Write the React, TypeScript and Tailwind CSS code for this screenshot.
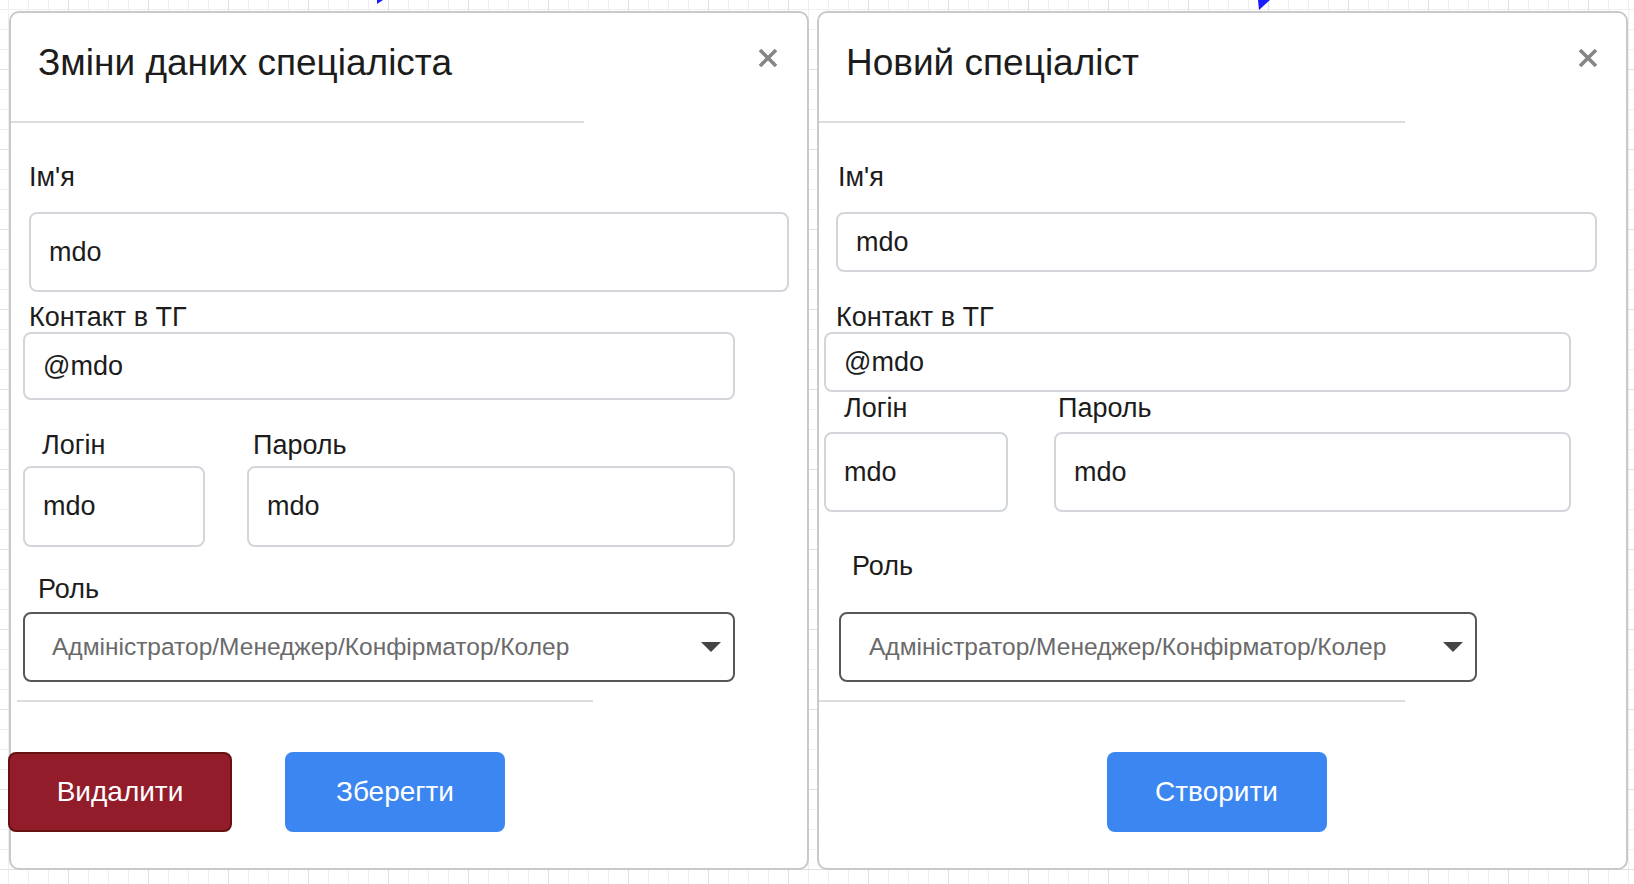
import React from 'react';

const input =
  "block rounded-[8px] border-2 border-[#d2d6db] bg-white px-[18px] text-[27px] text-[#1c1c1c] outline-none";

function CloseIcon({ className }: { className?: string }) {
  return (
    <svg width="20" height="20" viewBox="0 0 20 20" className={className}>
      <path d="M2 2 L18 18 M18 2 L2 18" stroke="#858585" strokeWidth="3.6" />
    </svg>
  );
}

function RoleSelect({ className }: { className: string }) {
  return (
    <div className={`flex items-center justify-between rounded-[8px] border-2 border-[#575757] bg-white ${className}`}>
      <span className="text-[24.5px] text-[#6a6a6a]">Адміністратор/Менеджер/Конфірматор/Колер</span>
      <svg width="20" height="10" viewBox="0 0 20 10">
        <polygon points="0,0 20,0 10,10" fill="#454545" />
      </svg>
    </div>
  );
}

export default function App() {
  return (
    <div className="relative h-[884px] w-full overflow-hidden bg-white bg-[linear-gradient(to_right,#e0e0e0_1px,transparent_1px),linear-gradient(to_bottom,#e0e0e0_1px,transparent_1px),linear-gradient(to_right,#efefef_1px,transparent_1px),linear-gradient(to_bottom,#efefef_1px,transparent_1px)] bg-[size:80px_80px,80px_80px,20px_20px,20px_20px] bg-[position:68px_69px,68px_69px,8px_9px,8px_9px] font-['Liberation_Sans',Arial,sans-serif] text-[#1c1c1c]">
      {/* arrow tips peeking from behind the dialogs */}
      <svg className="absolute left-[376px] top-0" width="8" height="5" viewBox="0 0 8 5">
        <polygon points="1,0 7,0 1,4" fill="#1a1aff" />
      </svg>
      <svg className="absolute left-[1257px] top-0" width="14" height="11" viewBox="0 0 14 11">
        <polygon points="1,0 13,0 2,10" fill="#1a1aff" />
      </svg>

      <div className="flex gap-[8px] pl-[9px] pt-[11px]">
        {/* Edit specialist */}
        <div className="flex h-[859px] w-[800px] shrink-0 flex-col rounded-[10px] border-2 border-[#c9c9c9] bg-white">
          <div className="flex items-start justify-between pl-[27px] pr-[29px] pt-[31px]">
            <h1 className="text-[37px] leading-none">Зміни даних спеціаліста</h1>
            <CloseIcon className="mt-[4px]" />
          </div>
          <div className="mt-[40px] h-[2px] w-[573px] bg-[#dcdcdc]" />

          <label className="ml-[18px] mt-[41px] text-[27px] leading-none">Ім'я</label>
          <input readOnly value="mdo" className={`${input} ml-[18px] mt-[21px] h-[80px] w-[760px]`} />

          <label className="ml-[18px] mt-[12px] text-[27px] leading-none">Контакт в ТГ</label>
          <input readOnly value="@mdo" className={`${input} ml-[12px] mt-[1px] h-[68px] w-[712px]`} />

          <div className="ml-[12px] mt-[32px] flex gap-[42px]">
            <div className="flex w-[182px] flex-col">
              <label className="ml-[19px] text-[27px] leading-none">Логін</label>
              <input readOnly value="mdo" className={`${input} mt-[7px] h-[81px] w-full`} />
            </div>
            <div className="flex w-[488px] flex-col">
              <label className="ml-[6px] text-[27px] leading-none">Пароль</label>
              <input readOnly value="mdo" className={`${input} mt-[7px] h-[81px] w-full`} />
            </div>
          </div>

          <label className="ml-[27px] mt-[29px] text-[27px] leading-none">Роль</label>
          <RoleSelect className="ml-[12px] mt-[9px] h-[70px] w-[712px] pl-[27px] pr-[12px]" />

          <div className="ml-[6px] mt-[18px] h-[2px] w-[576px] bg-[#dcdcdc]" />

          <div className="-ml-[3px] mt-[50px] flex gap-[53px]">
            <button className="h-[80px] w-[224px] rounded-[8px] border-2 border-[#661012] bg-[#931c2a] text-[28px] text-white">
              Видалити
            </button>
            <button className="h-[80px] w-[220px] rounded-[8px] bg-[#3b86f1] text-[28px] text-white">
              Зберегти
            </button>
          </div>
        </div>

        {/* New specialist */}
        <div className="flex h-[859px] w-[811px] shrink-0 flex-col rounded-[10px] border-2 border-[#c9c9c9] bg-white">
          <div className="flex items-start justify-between pl-[27px] pr-[28px] pt-[31px]">
            <h1 className="text-[37px] leading-none">Новий спеціаліст</h1>
            <CloseIcon className="mt-[4px]" />
          </div>
          <div className="mt-[40px] h-[2px] w-[586px] bg-[#dcdcdc]" />

          <label className="ml-[19px] mt-[41px] text-[27px] leading-none">Ім'я</label>
          <input readOnly value="mdo" className={`${input} ml-[17px] mt-[21px] h-[60px] w-[761px]`} />

          <label className="ml-[17px] mt-[32px] text-[27px] leading-none">Контакт в ТГ</label>
          <input readOnly value="@mdo" className={`${input} ml-[5px] mt-[1px] h-[60px] w-[747px]`} />

          <div className="ml-[5px] mt-[3px] flex gap-[46px]">
            <div className="flex w-[184px] flex-col">
              <label className="ml-[20px] text-[27px] leading-none">Логін</label>
              <input readOnly value="mdo" className={`${input} mt-[10px] h-[80px] w-full`} />
            </div>
            <div className="flex w-[517px] flex-col">
              <label className="ml-[4px] text-[27px] leading-none">Пароль</label>
              <input readOnly value="mdo" className={`${input} mt-[10px] h-[80px] w-full`} />
            </div>
          </div>

          <label className="ml-[33px] mt-[41px] text-[27px] leading-none">Роль</label>
          <RoleSelect className="ml-[20px] mt-[32px] h-[70px] w-[638px] pl-[28px] pr-[12px]" />

          <div className="mt-[18px] h-[2px] w-[586px] bg-[#dcdcdc]" />

          <div className="mt-[50px] flex justify-center pr-[12px]">
            <button className="h-[80px] w-[220px] rounded-[8px] bg-[#3b86f1] text-[28px] text-white">
              Створити
            </button>
          </div>
        </div>
      </div>
    </div>
  );
}
